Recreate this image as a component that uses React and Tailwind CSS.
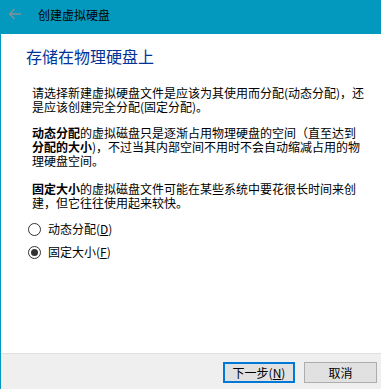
import React, { useState } from 'react';

const font = { fontFamily: '"Noto Sans CJK SC", "Noto Sans", sans-serif' };

const Radio = ({ checked, onClick, children }) => (
    <div className="flex items-center h-[16px] cursor-default" onClick={onClick}>
        <span className="w-[13px] h-[13px] rounded-full border border-[#333333] bg-white flex items-center justify-center">
            {checked && <span className="w-[7px] h-[7px] rounded-full bg-[#333333]" />}
        </span>
        <span className="ml-[7px] text-[12px] leading-[16px] text-black">{children}</span>
    </div>
);

const B = ({ children }) => <b className="inline-block leading-[14px]">{children}</b>;

const App = () => {
    const [mode, setMode] = useState('fixed');

    return (
        <div className="w-[381px] h-[389px] flex flex-col bg-white border-l border-[#0399be] overflow-hidden" style={font}>
            {/* title bar */}
            <div className="h-[34px] bg-[#0399be] flex items-start pt-[6px] shrink-0">
                <svg width="14" height="12" viewBox="0 0 14 12" className="ml-[7px] mt-[2px]">
                    <path d="M13 6H1.5M6.5 1L1.5 6l5 5" fill="none" stroke="#8a8f94" strokeWidth="1.3" />
                </svg>
                <span className="ml-[16px] text-[12px] leading-[18px] text-black">创建虚拟硬盘</span>
            </div>

            <h1 className="ml-[25px] mt-[12px] text-[16px] leading-[20px] text-[#003399] font-normal">存储在物理硬盘上</h1>

            <div className="ml-[31px] text-[12px] leading-[14px] text-black whitespace-nowrap">
                <p className="mt-[20px]">
                    请选择新建虚拟硬盘文件是应该为其使用而分配(动态分配)，还<br />
                    是应该创建完全分配(固定分配)。
                </p>
                <p className="mt-[12px]">
                    <B>动态分配</B>的虚拟磁盘只是逐渐占用物理硬盘的空间（直至达到<br />
                    <B>分配的大小</B>)，不过当其内部空间不用时不会自动缩减占用的物<br />
                    理硬盘空间。
                </p>
                <p className="mt-[14px]">
                    <B>固定大小</B>的虚拟磁盘文件可能在某些系统中要花很长时间来创<br />
                    建，但它往往使用起来较快。
                </p>
            </div>

            <div className="ml-[27px] mt-[11px] flex flex-col gap-[7px]">
                <Radio checked={mode === 'dynamic'} onClick={() => setMode('dynamic')}>
                    动态分配(<span className="underline">D</span>)
                </Radio>
                <Radio checked={mode === 'fixed'} onClick={() => setMode('fixed')}>
                    固定大小(<span className="underline">F</span>)
                </Radio>
            </div>

            <div className="flex-1" />

            {/* footer */}
            <div className="h-[36px] shrink-0 border-t border-[#dfdfdf] bg-[#efefef] flex justify-end items-start pt-[8px] pr-[4px] gap-[9px]">
                <button className="w-[72px] h-[21px] border-2 border-[#0078d7] bg-[#e1e1e1] text-[12px] leading-[16px] text-black">
                    下一步(<span className="underline">N</span>)
                </button>
                <button className="w-[73px] h-[21px] border border-[#adadad] bg-[#e1e1e1] text-[12px] leading-[16px] text-black">
                    取消
                </button>
            </div>
        </div>
    );
};

export default App;
